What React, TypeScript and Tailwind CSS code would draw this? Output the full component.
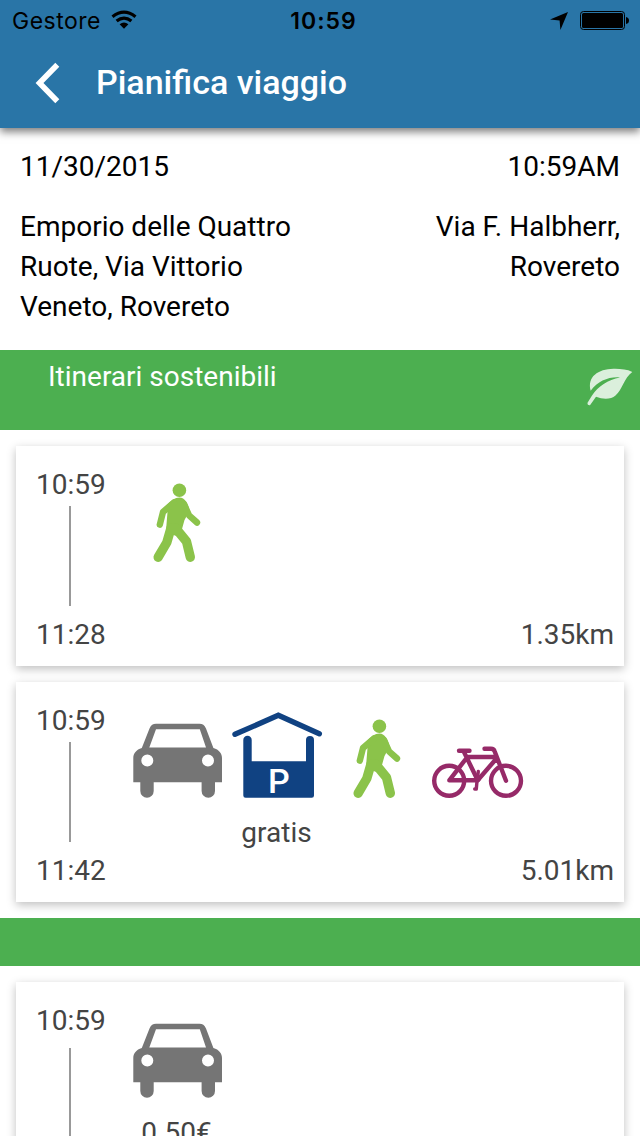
import type { ReactNode } from 'react';

function WalkIcon() {
  return (
    <svg viewBox="0 0 100 100" className="size-[100px]" fill="none" stroke="#8bc34a" strokeLinecap="round" strokeLinejoin="round">
      <circle cx="51.4" cy="22.3" r="6.8" fill="#8bc34a" stroke="none" />
      <path d="M38 38C43 32.5 47 29.5 51.5 29.5C57 29.5 60.5 36 61.5 43L56.5 52L54 61L49 68L37.8 65L39.5 44Z" fill="#8bc34a" stroke="none" />
      <path d="M46 34.5L35 44L31.8 56.7M56 36L61 47.3L69 54.5" strokeWidth="6.4" />
      <path d="M43 60L38.8 74.5L30.2 89.2M47.5 60L58.5 73.5L62.3 89.2" strokeWidth="9.4" />
    </svg>
  );
}

function CarIcon() {
  return (
    <svg viewBox="0 0 100 100" className="size-[100px]" fill="#757575">
      <path fillRule="evenodd" d="M13.8 44L21.5 24.5C23 21 25 19.7 28 19.7H71.5C74.5 19.7 76.5 21 78 24.5L85.4 44C91 45.5 94 49.5 94 54V78.3H87V87A6.7 6.7 0 0 1 73.6 87V78.3H25.7V87A6.7 6.7 0 0 1 12.3 87V78.3H5.3V54C5.3 49.5 8.3 45.5 13.8 44ZM21.3 43.5H78L71.8 25.3H28ZM13.3 56.4A6 6 0 1 0 25.3 56.4A6 6 0 1 0 13.3 56.4ZM74 56.4A6 6 0 1 0 86 56.4A6 6 0 1 0 74 56.4Z" />
    </svg>
  );
}

function ParkingIcon() {
  return (
    <svg viewBox="0 0 100 100" className="size-[100px]">
      <path d="M7 30.3L50.3 11.3L91.3 29.8" fill="none" stroke="#104282" strokeWidth="5.4" strokeLinecap="round" />
      <path d="M15.3 36A4.2 4.2 0 0 1 23.7 36V57.3H78V36A4 4 0 0 1 86 36V91.5Q86 93.8 83.7 93.8H17.6Q15.3 93.8 15.3 91.5Z" fill="#104282" />
      <text x="50.8" y="88.8" textAnchor="middle" fill="white" fontFamily="Roboto, sans-serif" fontWeight="500" fontSize="34">P</text>
    </svg>
  );
}

function BikeIcon() {
  return (
    <svg viewBox="0 0 100 100" className="size-[100px]" fill="none" stroke="#962a68" strokeWidth="4.4" strokeLinecap="round" strokeLinejoin="round">
      <circle cx="21.2" cy="76.8" r="15" />
      <circle cx="78" cy="76.8" r="15" />
      <path d="M31 46.8H41.5M36 48L49.7 76.3H21.3L37.8 55M38.5 53H67.5M68.5 54.5L49.7 76.3M78 76.8L66.7 47.5Q65.8 44.8 63 44.8H56.5" />
      <circle cx="49.7" cy="75" r="3" fill="#962a68" stroke="none" />
      <path d="M50.3 67.5L49 77L48.3 85H46.7" strokeWidth="3.4" />
    </svg>
  );
}

type Leg = { icon: ReactNode; label?: string };

type CardProps = { start: string; end?: string; distance?: string; legs: Leg[]; line?: string };

function Card({ start, end, distance, legs, line = 'mt-px h-[100px]' }: CardProps) {
  return (
    <article className="mx-4 flex h-[220px] shrink-0 bg-white text-[#444] shadow-[0_3px_9px_rgba(0,0,0,0.25)]">
      <div className="flex w-28 shrink-0 flex-col pt-[19px] pl-5">
        <span>{start}</span>
        <div className={`${line} ml-[33px] w-0.5 shrink-0 bg-[#999]`} />
        {end && <span className="mt-[9px]">{end}</span>}
      </div>
      <div className="flex flex-1 pt-[22px]">
        {legs.map((leg, i) => (
          <div key={i} className="flex w-[100px] shrink-0 flex-col items-center">
            {leg.icon}
            {leg.label && <span className="mt-[9px] mr-[3px]">{leg.label}</span>}
          </div>
        ))}
      </div>
      {distance && <span className="-ml-28 self-end pr-2.5 pb-[11px]">{distance}</span>}
    </article>
  );
}

export default function App() {
  return (
    <div className="flex h-[1136px] w-[640px] flex-col overflow-hidden bg-white font-['Roboto',sans-serif] text-[28px] leading-10 text-black">
      <header className="z-10 h-32 shrink-0 bg-[#2975a7] shadow-[0_4px_8px_rgba(0,0,0,0.5)]">
        <div className="grid h-[42px] grid-cols-[1fr_auto_1fr] items-center pr-[11px] pl-3 font-['Inter',sans-serif] text-[23px]">
          <div className="flex items-center gap-[10px]">
            <span className="tracking-[0.5px]">Gestore</span>
            <svg viewBox="0 0 26 20" className="mb-0.5 h-5 w-[26px]" fill="none" stroke="black" strokeWidth="3.2">
              <path d="M1.5 6.8Q13 -2.4 24.5 6.8M5.6 11.1Q13 5 20.4 11.1" />
              <path d="M8.6 14.2Q13 10.7 17.4 14.2L13 18.7Z" fill="black" stroke="none" />
            </svg>
          </div>
          <span className="pl-[6px] font-semibold tracking-[1px]">10:59</span>
          <div className="flex items-center justify-end gap-3">
            <svg viewBox="0 0 18 18" className="size-[18px]"><path d="M18 0L10.4 18L9.6 8.4L0 7.6Z" /></svg>
            <svg viewBox="0 0 49 20" className="h-5 w-[49px]">
              <rect x=".5" y=".5" width="44" height="18" rx="3" fill="none" stroke="black" />
              <rect x="2" y="2" width="41" height="15" rx="1.5" />
              <path d="M46 6Q49 6.5 49 9.5T46 13Z" />
            </svg>
          </div>
        </div>
        <div className="flex h-[82px] items-center pl-[34px]">
          <svg viewBox="0 0 28 44" className="h-11 w-7" fill="none" stroke="white" strokeWidth="5.6">
            <path d="M23.3 3.7L5.5 22L23.3 40.3" />
          </svg>
          <h1 className="mb-0.5 ml-[34px] text-[34px] font-medium text-white">Pianifica viaggio</h1>
        </div>
      </header>
      <section className="flex h-[222px] shrink-0 flex-col gap-5 px-5 pt-[19px]">
        <div className="flex justify-between"><span>11/30/2015</span><span>10:59AM</span></div>
        <div className="flex justify-between">
          <p className="w-[300px]">Emporio delle Quattro Ruote, Via Vittorio Veneto, Rovereto</p>
          <p className="w-[220px] text-right">Via F. Halbherr, Rovereto</p>
        </div>
      </section>
      <div className="flex h-20 shrink-0 justify-between bg-[#4caf50] pt-[7px] pr-1.5 pl-12 text-white">
        <span>Itinerari sostenibili</span>
        <svg viewBox="0 0 50 48" className="mt-[7px] h-12 w-[50px]" fill="white" fillOpacity=".8">
          <path d="M48.3 8C43 5.2 36 4.7 29.5 4.8C14 5 3 13 6.7 26.7C14 17 25 12.5 36 13.5C24 16 14 22 7.7 32L3.4 39Q3.3 41.5 6 41.2L12 32.7C19 35.5 27 35.5 31.5 31.5C38.5 25.5 40 14 48.3 8Z" />
        </svg>
      </div>
      <main className="flex flex-col gap-4 pt-4">
        <Card start="10:59" end="11:28" distance="1.35km" legs={[{ icon: <WalkIcon /> }]} />
        <Card
          start="10:59"
          end="11:42"
          distance="5.01km"
          legs={[{ icon: <CarIcon /> }, { icon: <ParkingIcon />, label: 'gratis' }, { icon: <WalkIcon /> }, { icon: <BikeIcon /> }]}
        />
        <div className="h-12 shrink-0 bg-[#4caf50]" />
        <Card start="10:59" line="mt-[7px] h-[110px]" legs={[{ icon: <CarIcon />, label: '0.50€' }]} />
      </main>
    </div>
  );
}
